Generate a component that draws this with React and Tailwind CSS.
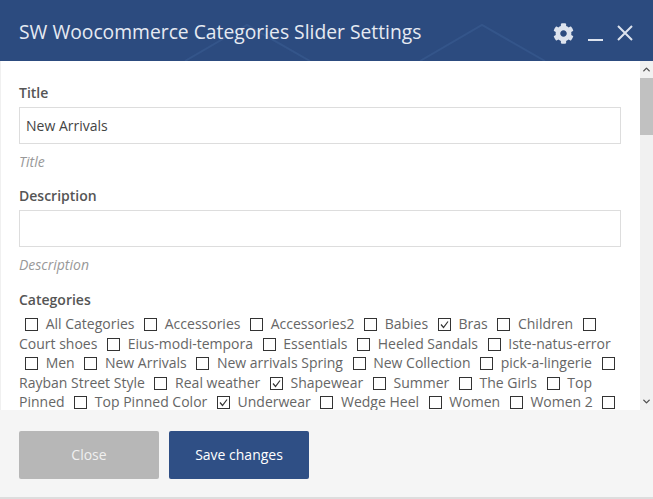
import React from "react";
import { ChevronUp, ChevronDown } from "lucide-react";
import { FaCog } from "react-icons/fa";

function Box({ checked }) {
  return (
    <span className="inline-block w-[13px] h-[13px] ml-[6px] mr-[4px] align-[-2px] border border-[#333] bg-white relative">
      {checked && (
        <svg viewBox="0 0 13 13" className="absolute -left-px -top-px w-[13px] h-[13px]">
          <path d="M3 6.5 L5.5 9.5 L10 3.5" fill="none" stroke="#333" strokeWidth="1.2" />
        </svg>
      )}
    </span>
  );
}

const cats = [
  ["All Categories"], ["Accessories"], ["Accessories2"], ["Babies"], ["Bras", 1], ["Children"],
  ["Court shoes"], ["Eius-modi-tempora"], ["Essentials"], ["Heeled Sandals"], ["Iste-natus-error"],
  ["Men"], ["New Arrivals"], ["New arrivals Spring"], ["New Collection"], ["pick-a-lingerie"],
  ["Rayban Street Style"], ["Real weather"], ["Shapewear", 1], ["Summer"], ["The Girls"], ["Top Pinned"],
  ["Top Pinned Color"], ["Underwear", 1], ["Wedge Heel"], ["Women"], ["Women 2"], [""],
];

function Field({ label, value }) {
  return (
    <div className="mb-[12px]">
      <div className="text-[14px] leading-[20px] font-semibold text-[#555] mb-[4px]">{label}</div>
      <input
        readOnly
        value={value}
        className="block w-full h-[37px] px-[6px] border border-[#ddd] bg-white text-[14px] text-[#444] outline-none"
      />
      <div className="mt-[6px] text-[14px] leading-[24px] italic text-[#999]">{label}</div>
    </div>
  );
}

export default function App() {
  return (
    <div className="w-[653px] h-[499px] flex flex-col overflow-hidden bg-[#ddd] font-['Open_Sans',sans-serif]">
      <header className="relative h-[61px] shrink-0 bg-[#2c4b7f] flex items-center pl-[19px] pr-[20px] pt-[3px] overflow-hidden">
        <svg className="absolute left-0 top-0 w-[653px] h-[61px]" viewBox="0 0 653 61" fill="none" stroke="#34558a" strokeWidth="2">
          <path d="M185 61 L247 25 L310 61" />
          <path d="M420 61 L482 25 L545 61" />
        </svg>
        <h1 className="relative flex-1 text-[19.3px] text-[#e6eaf2] font-normal">SW Woocommerce Categories Slider Settings</h1>
        <div className="relative flex items-center text-[#dde3ee] translate-y-[1px]">
          <FaCog size={21} />
          <span className="ml-[14px] block w-[15px] h-[2px] bg-[#dde3ee] translate-y-[7px]"></span>
          <svg viewBox="0 0 16 16" className="ml-[14px] w-[16px] h-[16px]" fill="none" stroke="#dde3ee" strokeWidth="2">
            <path d="M1 1 L15 15 M15 1 L1 15" />
          </svg>
        </div>
      </header>

      <main className="h-[349px] shrink-0 flex bg-white">
        <div className="flex-1 min-w-0 overflow-hidden pl-[18px] pr-[19px] pt-[22px] border-l border-[#f0f0f0]">
          <Field label="Title" value="New Arrivals" />
          <Field label="Description" value="" />
          <div className="text-[14px] leading-[20px] font-semibold text-[#555] mb-[4px] mt-[13px]">Categories</div>
          <div className="text-[14px] leading-[19.6px] text-[#666]">
            {cats.map(([name, c], i) => (
              <React.Fragment key={i}>
                <Box checked={c} />{" "}
                {name}{" "}
              </React.Fragment>
            ))}
          </div>
        </div>
        <div className="w-[13px] shrink-0 flex flex-col items-center bg-[#f1f1f1] text-[#505050]">
          <div className="h-[17px] flex items-center justify-center"><ChevronUp size={11} strokeWidth={3} /></div>
          <div className="w-full h-[57px] bg-[#c1c1c1]"></div>
          <div className="flex-1"></div>
          <div className="h-[17px] flex items-center justify-center"><ChevronDown size={11} strokeWidth={3} /></div>
        </div>
      </main>

      <footer className="h-[87px] shrink-0 bg-[#f5f5f5] flex items-start gap-[10px] pl-[19px] pt-[21px]">
        <button className="w-[140px] h-[48px] pb-[2px] rounded-[2px] bg-[#b7b7b7] text-[#f0f0f0] text-[14px]">Close</button>
        <button className="w-[140px] h-[48px] pb-[2px] rounded-[2px] bg-[#2f4f85] text-white text-[14px]">Save changes</button>
      </footer>
    </div>
  );
}
